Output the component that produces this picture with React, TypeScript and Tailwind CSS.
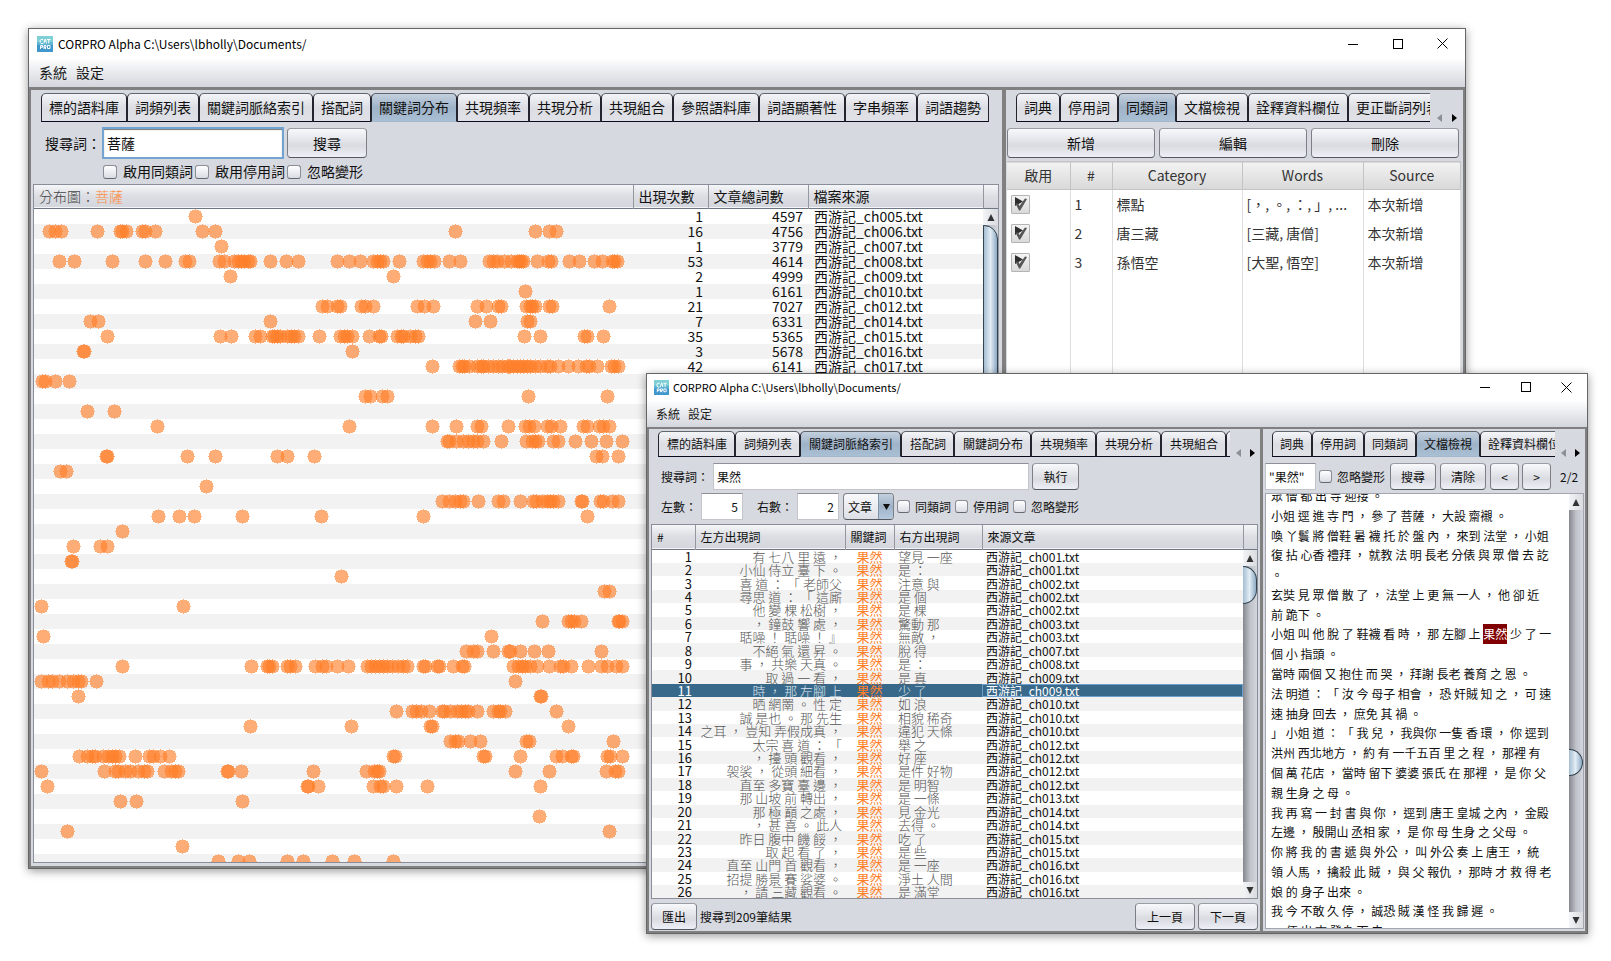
import React from "react";
import { clsx } from "clsx";

type Size = "lg" | "sm";

const DOTS: number[][] = [
  [161],
  [15, 21, 27, 63, 86, 88, 92, 108, 111, 121, 168, 181, 421, 501, 515, 522],
  [187],
  [25, 40, 78, 111, 131, 151, 155, 185, 190, 200, 204, 207, 210, 214, 216, 236, 252, 264, 303, 315, 326, 339, 343, 346, 349, 365, 389, 393, 396, 400, 415, 426, 455, 459, 463, 470, 477, 483, 485, 487, 489, 503, 514, 517, 535, 545, 560, 568, 578, 580, 583],
  [196, 359],
  [491],
  [288, 293, 303, 306, 327, 331, 339, 383, 390, 399, 443, 452, 464, 467, 492, 496, 498, 501, 515, 518, 575],
  [56, 64, 236, 441, 456, 493, 496],
  [73, 186, 197, 221, 226, 238, 240, 243, 246, 253, 257, 260, 264, 285, 306, 310, 313, 318, 335, 345, 347, 363, 367, 369, 376, 381, 384, 490, 506, 550, 553, 569],
  [49, 50, 318],
  [398, 425, 428, 430, 435, 443, 447, 449, 454, 459, 464, 468, 473, 476, 479, 483, 486, 489, 493, 496, 501, 506, 513, 516, 524, 534, 544, 552, 555, 563, 577, 580, 584],
  [8, 11, 21, 35],
  [331, 336, 348, 353, 494, 573],
  [53, 80],
  [123, 315, 398, 422, 443, 447, 474, 491, 495, 500, 513, 517, 526, 549, 553, 565, 569, 575],
  [413, 415, 422, 429, 434, 439, 443, 449, 467, 492, 498, 501, 504, 519, 524, 541, 557, 572, 588],
  [72, 73, 153, 181, 243, 253, 280, 562, 568, 584],
  [26, 32],
  [172],
  [408, 415, 421, 426, 429, 444, 464, 469, 486, 499, 502, 508, 513, 516, 519, 524, 547, 548, 566, 569, 578, 584],
  [124, 145, 160, 208, 287, 389, 553],
  [88],
  [39, 66, 73],
  [37, 38],
  [307],
  [570, 575],
  [7, 149],
  [508, 534, 537, 540, 547, 584, 585, 588],
  [9, 457],
  [432, 439, 443, 459, 474, 476, 486, 500, 514, 567],
  [88, 217, 233, 235, 238, 253, 256, 261, 281, 288, 292, 303, 314, 333, 337, 341, 345, 349, 353, 358, 364, 369, 373, 389, 391, 403, 405, 419, 428, 430, 479, 484, 488, 491, 496, 503, 515, 526, 529, 537, 554, 567, 573, 582, 588],
  [7, 14, 18, 25, 33, 39, 44, 47, 62, 481],
  [44],
  [362, 378, 382, 387, 395, 408, 410, 416, 423, 427, 431, 434, 443, 459, 464, 466, 471, 522],
  [216, 317, 396, 398, 534],
  [416, 421, 424, 436, 446, 492, 495, 579],
  [45, 53, 58, 61, 69, 74, 78, 81, 85, 101, 115, 119, 126, 135, 359, 361, 449, 451, 486, 522, 528, 537, 539, 573, 576, 588],
  [7, 70, 81, 84, 91, 96, 104, 110, 113, 130, 137, 141, 144, 193, 194, 207, 279, 332, 340, 343, 345, 481, 515, 572, 581, 584],
  [13, 273, 274, 284, 339, 346, 349, 362, 393, 506],
  [86, 102, 208],
  [505],
  [33, 575],
  [148],
  [184, 204, 215, 253, 269, 298, 320, 359],
];
DOTS[32].push(506, 507);

const FILES: [string, string, string][] = [
  ["1", "4597", "005"],
  ["16", "4756", "006"],
  ["1", "3779", "007"],
  ["53", "4614", "008"],
  ["2", "4999", "009"],
  ["1", "6161", "010"],
  ["21", "7027", "012"],
  ["7", "6331", "014"],
  ["35", "5365", "015"],
  ["3", "5678", "016"],
  ["42", "6141", "017"],
];

const KWIC: [string, string, string][] = [
  ["有 七八 里 遠 ，", "望見 一座", "001"],
  ["小仙 侍立 臺 下 。", "是 ：", "001"],
  ["喜 道 ： 「 老師父", "注意 與", "002"],
  ["尋思 道 ： 「 這廝", "是 個", "002"],
  ["他 變 棵 松樹 ，", "是 棵", "002"],
  ["， 鐘鼓 響 處 ，", "驚動 那", "003"],
  ["聒噪 ！ 聒噪 ！ 』", "無敵 ，", "003"],
  ["不絕 氣 還 昇 。", "脫 得", "007"],
  ["事 ， 共樂 天真 。", "是 ：", "008"],
  ["取 過 一 看 ，", "是 真", "009"],
  ["時 ， 那 左腳 上", "少 了", "009"],
  ["晒 網罱 。 性 定", "如 浪", "010"],
  ["誠 是也 。 那 先生", "相貌 稀奇", "010"],
  ["之耳 ， 豈知 弄假成真 ，", "違犯 天條", "010"],
  ["太宗 喜 道 ： 「", "舉 之", "012"],
  ["， 擡 頭 觀看 ，", "好 座", "012"],
  ["袈裟 ， 從頭 細看 ，", "是件 好物", "012"],
  ["直至 多寶 臺 邊 ，", "是 明智", "012"],
  ["那 山坡 前 轉出 ，", "是 一條", "013"],
  ["那 極 巔 之處 ，", "見 金光", "014"],
  ["， 甚 喜 。 此人", "去得 。", "014"],
  ["昨日 腹中 饑 餒 ，", "吃 了", "015"],
  ["取 起 看 了 ，", "是 些", "015"],
  ["直至 山門 首 觀看 ，", "是 一座", "016"],
  ["招提 勝景 賽 娑婆 。", "淨土 人間", "016"],
  ["， 請 三藏 觀看 。", "是 滿堂", "016"],
];

const DOC: React.ReactNode[] = [
  "眾 僧 都 出 寺 迎接 。",
  "小姐 逕 進 寺 門 ， 參 了 菩薩 ， 大設 齋襯 。",
  "喚 丫鬟 將 僧鞋 暑 襪 托 於 盤 內 ， 來到 法堂 ， 小姐",
  "復 拈 心香 禮拜 ， 就教 法 明 長老 分俵 與 眾 僧 去 訖",
  "。",
  "玄奘 見 眾 僧 散 了 ， 法堂 上 更 無 一人 ， 他 卻 近",
  "前 跪下 。",
  <>
    小姐 叫 他 脫 了 鞋襪 看 時 ， 那 左腳 上{" "}
    <mark className="inline-block h-5 bg-[#800000] text-white">果然</mark> 少 了 一
  </>,
  "個 小 指頭 。",
  "當時 兩個 又 抱住 而 哭 ， 拜謝 長老 養育 之 恩 。",
  "法 明道 ： 「 汝 今 母子 相會 ， 恐 奸賊 知 之 ， 可 速",
  "速 抽身 回去 ， 庶免 其 禍 。",
  "」 小姐 道 ： 「 我 兒 ， 我與你 一隻 香 環 ， 你 逕到",
  "洪州 西北地方 ， 約 有 一千五百 里 之 程 ， 那裡 有",
  "個 萬 花店 ， 當時 留下 婆婆 張氏 在 那裡 ， 是 你 父",
  "親 生身 之 母 。",
  "我 再 寫 一 封 書 與 你 ， 逕到 唐王 皇城 之內 ， 金殿",
  "左邊 ， 殷開山 丞相 家 ， 是 你 母 生身 之 父母 。",
  "你 將 我 的 書 遞 與 外公 ， 叫 外公 奏 上 唐王 ， 統",
  "領 人馬 ， 擒殺 此 賊 ， 與 父 報仇 ， 那時 才 救 得 老",
  "娘 的 身子 出來 。",
  "我 今 不敢 久 停 ， 誠恐 賊 漢 怪 我 歸 遲 。",
  "， 便 出 寺 登舟 而 去",
];

function Logo({ size }: { size: Size }) {
  return (
    <svg viewBox="0 0 16 16" aria-hidden="true" className={size === "lg" ? "h-4 w-4" : "h-[15px] w-[15px]"}>
      <rect width="16" height="8" fill="#7fd0d6" />
      <rect y="8" width="16" height="8" fill="#3f97cb" />
      <rect y="6" width="16" height="3" fill="#5cb4d2" />
      <g fill="none" stroke="#fff" strokeWidth="1">
        <path d="M6 3.5H4L3.2 4.5V6.5L4 7.5H6M6.8 7.5L8.2 3L9.6 7.5M10 3.5H13.5M11.8 3.5V7.5" />
        <path d="M3.5 13V9.5H5.5V11.3H3.5M7 13V9.5H9V11.3H7L9 13M10.5 9.5H13V12.5H10.5Z" />
      </g>
    </svg>
  );
}

function TitleBar({ size }: { size: Size }) {
  const lg = size === "lg";
  const btn = clsx("flex h-full items-center justify-center", lg ? "w-[45px]" : "w-[41px]");
  return (
    <header className={clsx("flex shrink-0 items-center bg-white", lg ? "h-[29px] pl-2" : "h-[26px] pl-[7px]")}>
      <Logo size={size} />
      <h1 className={clsx("flex-1 truncate text-black", lg ? "pl-[5px] text-[12px]" : "pl-1 text-[11px]")}>
        CORPRO Alpha C:\Users\lbholly\Documents/
      </h1>
      <button aria-label="最小化" className={btn}>
        <svg width="10" height="10" stroke="#000" shapeRendering="crispEdges"><path d="M0 5.5H10" /></svg>
      </button>
      <button aria-label="最大化" className={btn}>
        <svg width="10" height="10" stroke="#000" fill="none" shapeRendering="crispEdges"><rect x=".5" y=".5" width="9" height="9" /></svg>
      </button>
      <button aria-label="關閉" className={btn}>
        <svg width="11" height="11" stroke="#000"><path d="M.5 .5L10.5 10.5M10.5 .5L.5 10.5" /></svg>
      </button>
    </header>
  );
}

function MenuBar({ size }: { size: Size }) {
  return (
    <nav
      className={clsx(
        "flex shrink-0 items-center border-b-[#808080] bg-linear-to-b from-white to-[#d3d6dd] text-[#1a1a1a]",
        size === "lg" ? "h-8 gap-[9px] border-b-3 pl-[10px] text-[14px]" : "h-[29px] gap-2 border-b-2 pl-[9px] text-[12px]",
      )}
    >
      <button>系統</button>
      <button>設定</button>
    </nav>
  );
}

const TAB_SIZES = {
  lg: "h-[29px] px-[7px] text-[14px]",
  sm: "h-[26px] pl-2 pr-[7px] text-[12px]",
  tight: "h-[26px] px-[7px] text-[12px]",
};

function Tabs({
  items,
  active,
  size,
  scroll,
}: {
  items: string[];
  active: string;
  size: keyof typeof TAB_SIZES;
  scroll?: boolean;
}) {
  const lg = size === "lg";
  return (
    <div className={clsx("flex shrink-0 items-end", lg ? "pt-[3px] pl-[10px]" : "pt-[2px] pl-[9px]")}>
      <div role="tablist" className="flex min-w-0 flex-1 overflow-hidden">
        {items.map((t) => (
          <button
            key={t}
            role="tab"
            aria-selected={t === active}
            className={clsx(
              "shrink-0 rounded-t-[5px] border border-t-[#62656d] border-x-[#23242e] whitespace-nowrap text-[#111]",
              TAB_SIZES[size],
              t === active
                ? "border-b-[#a3b8cc] bg-linear-to-b from-[#c3d0de] via-[#9fb3c8] to-[#a9bfd4]"
                : "border-b-[#0a0a1c] bg-linear-to-b from-[#f4f5f8] via-[#dcdee4] to-[#dfe1e7]",
            )}
          >
            {t}
          </button>
        ))}
      </div>
      {scroll && (
        <div className={clsx("flex shrink-0 items-center", lg ? "w-[33px] gap-[10px] pl-[7px]" : "w-[30px] gap-[9px] pl-[6px]")}>
          <button aria-label="向左捲動"><svg width="5" height="8" fill="#8b8f96"><path d="M5 0V8L0 4Z" /></svg></button>
          <button aria-label="向右捲動"><svg width="5" height="8" fill="#000"><path d="M0 0V8L5 4Z" /></svg></button>
        </div>
      )}
    </div>
  );
}

function Button({ children, className, label }: { children: React.ReactNode; className: string; label?: string }) {
  return (
    <button
      aria-label={label}
      className={clsx(
        "rounded-[4px] border border-x-[#7c7f86] border-t-[#9a9da5] border-b-[#55585f] bg-linear-to-b from-[#f8f9fb] via-[#d9dbe1] via-60% to-[#eef0f7] whitespace-nowrap text-[#111]",
        className,
      )}
    >
      {children}
    </button>
  );
}

function Check({ label, size }: { label: string; size: Size }) {
  const lg = size === "lg";
  return (
    <label className={clsx("flex shrink-0 items-center whitespace-nowrap", lg ? "gap-[6px] text-[14px]" : "gap-[5px] text-[12px]")}>
      <input
        type="checkbox"
        className={clsx(
          "appearance-none rounded-[3px] border border-[#8b8e96] border-b-[#65686f] bg-linear-to-b from-white to-[#d9dce4]",
          lg ? "h-[14px] w-[14px]" : "h-[13px] w-[13px]",
        )}
      />
      {label}
    </label>
  );
}

const headBg = "bg-linear-to-b from-[#f5f6f8] via-[#dcdee3] to-[#d3d6dd]";

function ArrowCap({ down }: { down?: boolean }) {
  return (
    <button
      aria-label={down ? "向下捲動" : "向上捲動"}
      className="flex h-4 w-full shrink-0 items-center justify-center bg-linear-to-r from-[#f3f4f6] to-[#d9dbe0]"
    >
      <svg width="8" height="7" fill="#333">
        <path d={down ? "M.5 0H7.5L4 7Z" : "M.5 7H7.5L4 0Z"} />
      </svg>
    </button>
  );
}

const thumb = "border border-[#33434f] bg-linear-to-r from-[#a5bdd1] via-[#e2edf5] to-[#8fabc4]";
const track = "bg-linear-to-r from-[#85888f] via-[#bfc2c8] to-[#d3d6dc]";

function DistributionTable() {
  const th = "border-l border-[#9497a0] p-0 pl-[5px] text-left font-normal";
  return (
    <div className="mr-[3px] mb-[3px] ml-[2px] flex min-h-0 flex-1 overflow-hidden border border-r-[#9497a0] border-[#8a8e99] bg-white">
      <div className="min-w-0 flex-1 overflow-hidden">
        <table className="w-full table-fixed border-collapse text-[14px] leading-[15px] text-[#111]">
          <colgroup>
            <col />
            <col className="w-[75px]" />
            <col className="w-[100px]" />
            <col className="w-[175px]" />
          </colgroup>
          <thead>
            <tr className={clsx("h-[23px] border-b border-[#6f7683]", headBg)}>
              <th className="p-0 pl-[5px] text-left font-light text-[#444]">
                分布圖：<span className="text-[#ff8a3c]">菩薩</span>
              </th>
              <th className={th}>出現次數</th>
              <th className={th}>文章總詞數</th>
              <th className={th}>檔案來源</th>
            </tr>
          </thead>
          <tbody>
            {DOTS.map((dots, i) => (
              <tr key={i} className="h-[15px] even:bg-[#f2f2f2]">
                <td className="p-0">
                  <svg className="block h-[15px] w-full overflow-visible" shapeRendering="crispEdges" fill="#ff7f28" fillOpacity=".64">
                    {dots.map((x, k) => (
                      <circle key={k} cx={x + 0.5} cy="7.5" r="7.1" />
                    ))}
                  </svg>
                </td>
                <td className="p-0 pr-[5px] text-right">{FILES[i]?.[0]}</td>
                <td className="p-0 pr-[5px] text-right">{FILES[i]?.[1]}</td>
                <td className="p-0 pl-[6px]">{FILES[i] && `西游記_ch${FILES[i][2]}.txt`}</td>
              </tr>
            ))}
          </tbody>
        </table>
      </div>
      <div className="flex w-[15px] shrink-0 flex-col">
        <div className={clsx("h-6 shrink-0 border-b border-l border-b-[#6f7683] border-l-[#9497a0]", headBg)} />
        <ArrowCap />
        <div className={clsx("flex min-h-0 flex-1 flex-col", track)}>
          <div className={clsx("h-[300px] rounded-tr-[14px]", thumb)} />
        </div>
      </div>
    </div>
  );
}

function SynonymTable() {
  const th = "border-r border-[#c4c4c4] p-0 text-center font-normal";
  const td = "border-r border-[#dedede] p-0 whitespace-nowrap";
  const rows = [
    ["標點", "[，, 。, ：, 」, ..."],
    ["唐三藏", "[三藏, 唐僧]"],
    ["孫悟空", "[大聖, 悟空]"],
  ];
  return (
    <div className="mr-[2px] ml-px min-h-0 flex-1 bg-white">
      <table className="h-full w-full table-fixed border-collapse text-[14px] text-[#333]">
        <colgroup>
          <col className="w-[63px]" />
          <col className="w-[42px]" />
          <col className="w-[130px]" />
          <col className="w-[121px]" />
          <col />
        </colgroup>
        <thead>
          <tr className="h-7 border-y border-[#c4c4c4] bg-linear-to-b from-[#f2f2f2] to-[#d9d9d9]">
            <th className={th}>啟用</th>
            <th className={th}>#</th>
            <th className={th}>Category</th>
            <th className={th}>Words</th>
            <th className={th}>Source</th>
          </tr>
        </thead>
        <tbody>
          {rows.map(([cat, words], i) => (
            <tr key={cat} className="h-[29px]">
              <td className={td}>
                <label className="relative ml-1 flex h-[19px] w-[19px]">
                  <input
                    type="checkbox"
                    defaultChecked
                    aria-label={`啟用 ${cat}`}
                    className="h-[19px] w-[19px] appearance-none rounded-[1px] border border-[#b4b4b4] bg-linear-to-b from-[#f4f4f4] to-[#dadada]"
                  />
                  <svg className="pointer-events-none absolute inset-0" width="19" height="19">
                    <path d="M4 2L12 6.5L4 11Z" fill="#2e2e2e" />
                    <path d="M4.5 8.5L7.2 8.5L8.5 11L14 3.5L16 4L9.2 15.5H8Z" fill="#555" />
                  </svg>
                </label>
              </td>
              <td className={clsx(td, "pl-1")}>{i + 1}</td>
              <td className={clsx(td, "pl-1")}>{cat}</td>
              <td className={clsx(td, "overflow-hidden pl-1")}>{words}</td>
              <td className={clsx(td, "pl-1")}>本次新增</td>
            </tr>
          ))}
          <tr>
            <td className={td} />
            <td className={td} />
            <td className={td} />
            <td className={td} />
            <td className={td} />
          </tr>
        </tbody>
      </table>
    </div>
  );
}

const windowBox =
  "absolute flex flex-col overflow-hidden border border-[#666] bg-[#d6d9df] shadow-[0_2px_9px_rgba(0,0,0,0.4)] text-[#111]";

function BackWindow() {
  return (
    <section className={clsx(windowBox, "top-[28px] right-[145px] left-[28px] h-[841px]")}>
      <TitleBar size="lg" />
      <MenuBar size="lg" />
      <div className="flex min-h-0 flex-1 border-x-2 border-b-2 border-[#808080]">
        <div className="flex min-w-0 flex-1 flex-col">
          <Tabs
            size="lg"
            active="關鍵詞分布"
            items={["標的語料庫", "詞頻列表", "關鍵詞脈絡索引", "搭配詞", "關鍵詞分布", "共現頻率", "共現分析", "共現組合", "參照語料庫", "詞語顯著性", "字串頻率", "詞語趨勢"]}
          />
          <div className="flex items-center pt-[5px] pl-[14px] text-[14px]">
            <label htmlFor="q1">搜尋詞：</label>
            <input
              id="q1"
              defaultValue="菩薩"
              className="ml-px h-8 w-[182px] border-2 border-[#73a4d1] bg-white px-[3px] shadow-[inset_0_1px_1px_#777]"
            />
            <Button className="ml-[3px] h-[30px] w-20 text-[14px]">搜尋</Button>
          </div>
          <div className="flex h-[25px] shrink-0 items-center gap-[2px] pl-[72px]">
            <Check size="lg" label="啟用同類詞" />
            <Check size="lg" label="啟用停用詞" />
            <Check size="lg" label="忽略變形" />
          </div>
          <DistributionTable />
        </div>
        <div className="w-1 shrink-0 bg-[#808080]" />
        <div className="flex w-[457px] shrink-0 flex-col">
          <Tabs size="lg" scroll active="同類詞" items={["詞典", "停用詞", "同類詞", "文檔檢視", "詮釋資料欄位", "更正斷詞列表"]} />
          <div className="flex gap-1 pt-[6px] pr-1 pb-[3px] pl-px text-[14px]">
            <Button className="h-[30px] flex-1">新增</Button>
            <Button className="h-[30px] flex-1">編輯</Button>
            <Button className="h-[30px] flex-1">刪除</Button>
          </div>
          <SynonymTable />
        </div>
      </div>
    </section>
  );
}

function KwicTable() {
  const th = "border-l border-[#9497a0] p-0 pl-[5px] text-left font-normal";
  return (
    <div className="mx-[2px] mt-1 flex h-[375px] overflow-hidden border border-[#8a8e99] bg-white">
      <div className="min-w-0 flex-1 overflow-hidden">
        <table className="w-full table-fixed border-collapse text-[12px] leading-[13px]">
          <colgroup>
            <col className="w-[43px]" />
            <col className="w-[150px]" />
            <col className="w-[49px]" />
            <col className="w-[88px]" />
            <col />
          </colgroup>
          <thead>
            <tr className={clsx("h-6 border-b border-[#6f7683]", headBg)}>
              <th className="p-0 pl-[5px] text-left font-normal">#</th>
              <th className={th}>左方出現詞</th>
              <th className={th}>關鍵詞</th>
              <th className={th}>右方出現詞</th>
              <th className={th}>來源文章</th>
            </tr>
          </thead>
        </table>
        <table className="h-[349px] w-full table-fixed border-collapse text-[13px] leading-[13px] whitespace-nowrap">
          <colgroup>
            <col className="w-[43px]" />
            <col className="w-[150px]" />
            <col className="w-[49px]" />
            <col className="w-[88px]" />
            <col />
          </colgroup>
          <tbody>
            {KWIC.map(([left, right, ch], i) => {
              const sel = i === 10;
              return (
                <tr key={i} className={sel ? "bg-[#39698a] text-white" : "odd:bg-white even:bg-[#f2f2f2]"}>
                  <td className="p-0 pr-[3px] text-right">{i + 1}</td>
                  <td className={clsx("p-0 pr-[3px] text-right font-light", sel ? "text-[#dde6ee]" : "text-[#555]")}>{left}</td>
                  <td className="p-0 text-center text-[#ff7f28]">果然</td>
                  <td className={clsx("p-0 pl-1 font-light", sel ? "text-[#dde6ee]" : "text-[#555]")}>{right}</td>
                  <td className={clsx("p-0 pl-1 text-[12px]", sel && "outline -outline-offset-1 outline-[#6c9fcb]")}>{`西游記_ch${ch}.txt`}</td>
                </tr>
              );
            })}
          </tbody>
        </table>
      </div>
      <div className="flex w-[14px] shrink-0 flex-col">
        <div className={clsx("h-[25px] shrink-0 border-b border-l border-b-[#6f7683] border-l-[#9497a0]", headBg)} />
        <ArrowCap />
        <div className={clsx("min-h-0 flex-1", track)}>
          <div className={clsx("h-[38px] rounded-r-full border-l-0", thumb)} />
        </div>
        <ArrowCap down />
      </div>
    </div>
  );
}

const field = "h-[27px] border border-[#c3c5ca] border-t-[#8e9096] bg-white text-[12px]";

function FrontWindow() {
  return (
    <section className={clsx(windowBox, "top-[373px] right-[23px] left-[646px] h-[561px]")}>
      <TitleBar size="sm" />
      <MenuBar size="sm" />
      <div className="flex min-h-0 flex-1 border-x-2 border-b-2 border-[#808080]">
        <div className="flex min-w-0 flex-1 flex-col text-[12px]">
          <Tabs
            size="sm"
            scroll
            active="關鍵詞脈絡索引"
            items={["標的語料庫", "詞頻列表", "關鍵詞脈絡索引", "搭配詞", "關鍵詞分布", "共現頻率", "共現分析", "共現組合", "參照語料庫"]}
          />
          <div className="flex items-center pt-[6px] pl-3">
            <label htmlFor="q2" className="w-[52px] whitespace-nowrap">搜尋詞：</label>
            <input id="q2" defaultValue="果然" className={clsx(field, "w-[316px] px-[3px]")} />
            <Button className="ml-[3px] h-[27px] w-[47px]">執行</Button>
          </div>
          <div className="flex items-center pt-[3px] pl-3">
            <label htmlFor="left" className="w-10">左數：</label>
            <input id="left" defaultValue="5" className={clsx(field, "w-[42px] pr-1 text-right")} />
            <label htmlFor="right" className="ml-[14px] w-10">右數：</label>
            <input id="right" defaultValue="2" className={clsx(field, "w-[42px] pr-1 text-right")} />
            <div className="relative mr-[3px] ml-1 flex">
              <select
                aria-label="範圍"
                className="h-[27px] w-[51px] appearance-none rounded-[4px] border border-[#7c7f86] border-b-[#55585f] bg-linear-to-b from-[#f8f9fb] to-[#dcdfe6] pl-1 text-[12px]"
              >
                <option>文章</option>
              </select>
              <span className="pointer-events-none absolute inset-y-px right-px flex w-[15px] items-center justify-center rounded-r-[3px] border-l border-[#7f93a6] bg-linear-to-b from-[#c3d0de] via-[#9fb3c8] to-[#b5cade]">
                <svg width="7" height="6" fill="#111"><path d="M0 0H7L3.5 6Z" /></svg>
              </span>
            </div>
            <div className="flex items-center gap-1">
              <Check size="sm" label="同類詞" />
              <Check size="sm" label="停用詞" />
              <Check size="sm" label="忽略變形" />
            </div>
          </div>
          <KwicTable />
          <div className="flex items-center px-[2px] pt-1">
            <Button className="h-[27px] w-[46px]">匯出</Button>
            <p className="flex-1 pl-[3px]">搜尋到209筆結果</p>
            <Button className="mr-[3px] h-[27px] w-[60px]">上一頁</Button>
            <Button className="h-[27px] w-[60px]">下一頁</Button>
          </div>
        </div>
        <div className="w-[3px] shrink-0 bg-[#808080]" />
        <div className="flex w-[322px] shrink-0 flex-col text-[12px]">
          <Tabs size="tight" scroll active="文檔檢視" items={["詞典", "停用詞", "同類詞", "文檔檢視", "詮釋資料欄位"]} />
          <div className="flex shrink-0 items-center pt-[6px] pl-[2px]">
            <input aria-label="文檔搜尋" defaultValue={'"果然"'} className={clsx(field, "mr-[3px] w-[51px] px-[3px]")} />
            <Check size="sm" label="忽略變形" />
            <Button className="ml-[5px] h-[27px] w-[46px]">搜尋</Button>
            <Button className="ml-1 h-[27px] w-[46px]">清除</Button>
            <Button label="上一筆" className="ml-1 h-[27px] w-[29px]">&lt;</Button>
            <Button label="下一筆" className="ml-[3px] h-[27px] w-[29px]">&gt;</Button>
            <span className="ml-[9px]">2/2</span>
          </div>
          <div className="mr-px mt-[3px] mb-[2px] ml-[2px] flex min-h-0 flex-1 overflow-hidden border border-[#a3a6ae] bg-white">
            <div className="min-w-0 flex-1 overflow-hidden pl-[5px]">
              <div className="-mt-2 grid h-[455px] auto-rows-fr leading-5 whitespace-nowrap">
                {DOC.map((line, i) => (
                  <p key={i}>{line}</p>
                ))}
              </div>
            </div>
            <div className="flex w-[14px] shrink-0 flex-col">
              <ArrowCap />
              <div className={clsx("flex min-h-0 flex-1 flex-col", track)}>
                <div className="flex-[240]" />
                <div className={clsx("h-[27px] shrink-0 rounded-r-full border-l-0", thumb)} />
                <div className="flex-[136]" />
              </div>
              <ArrowCap down />
            </div>
          </div>
        </div>
      </div>
    </section>
  );
}

export default function App() {
  return (
    <main className="relative h-screen min-h-[961px] overflow-hidden bg-white font-['Noto_Sans_CJK_TC',sans-serif]">
      <BackWindow />
      <FrontWindow />
    </main>
  );
}
